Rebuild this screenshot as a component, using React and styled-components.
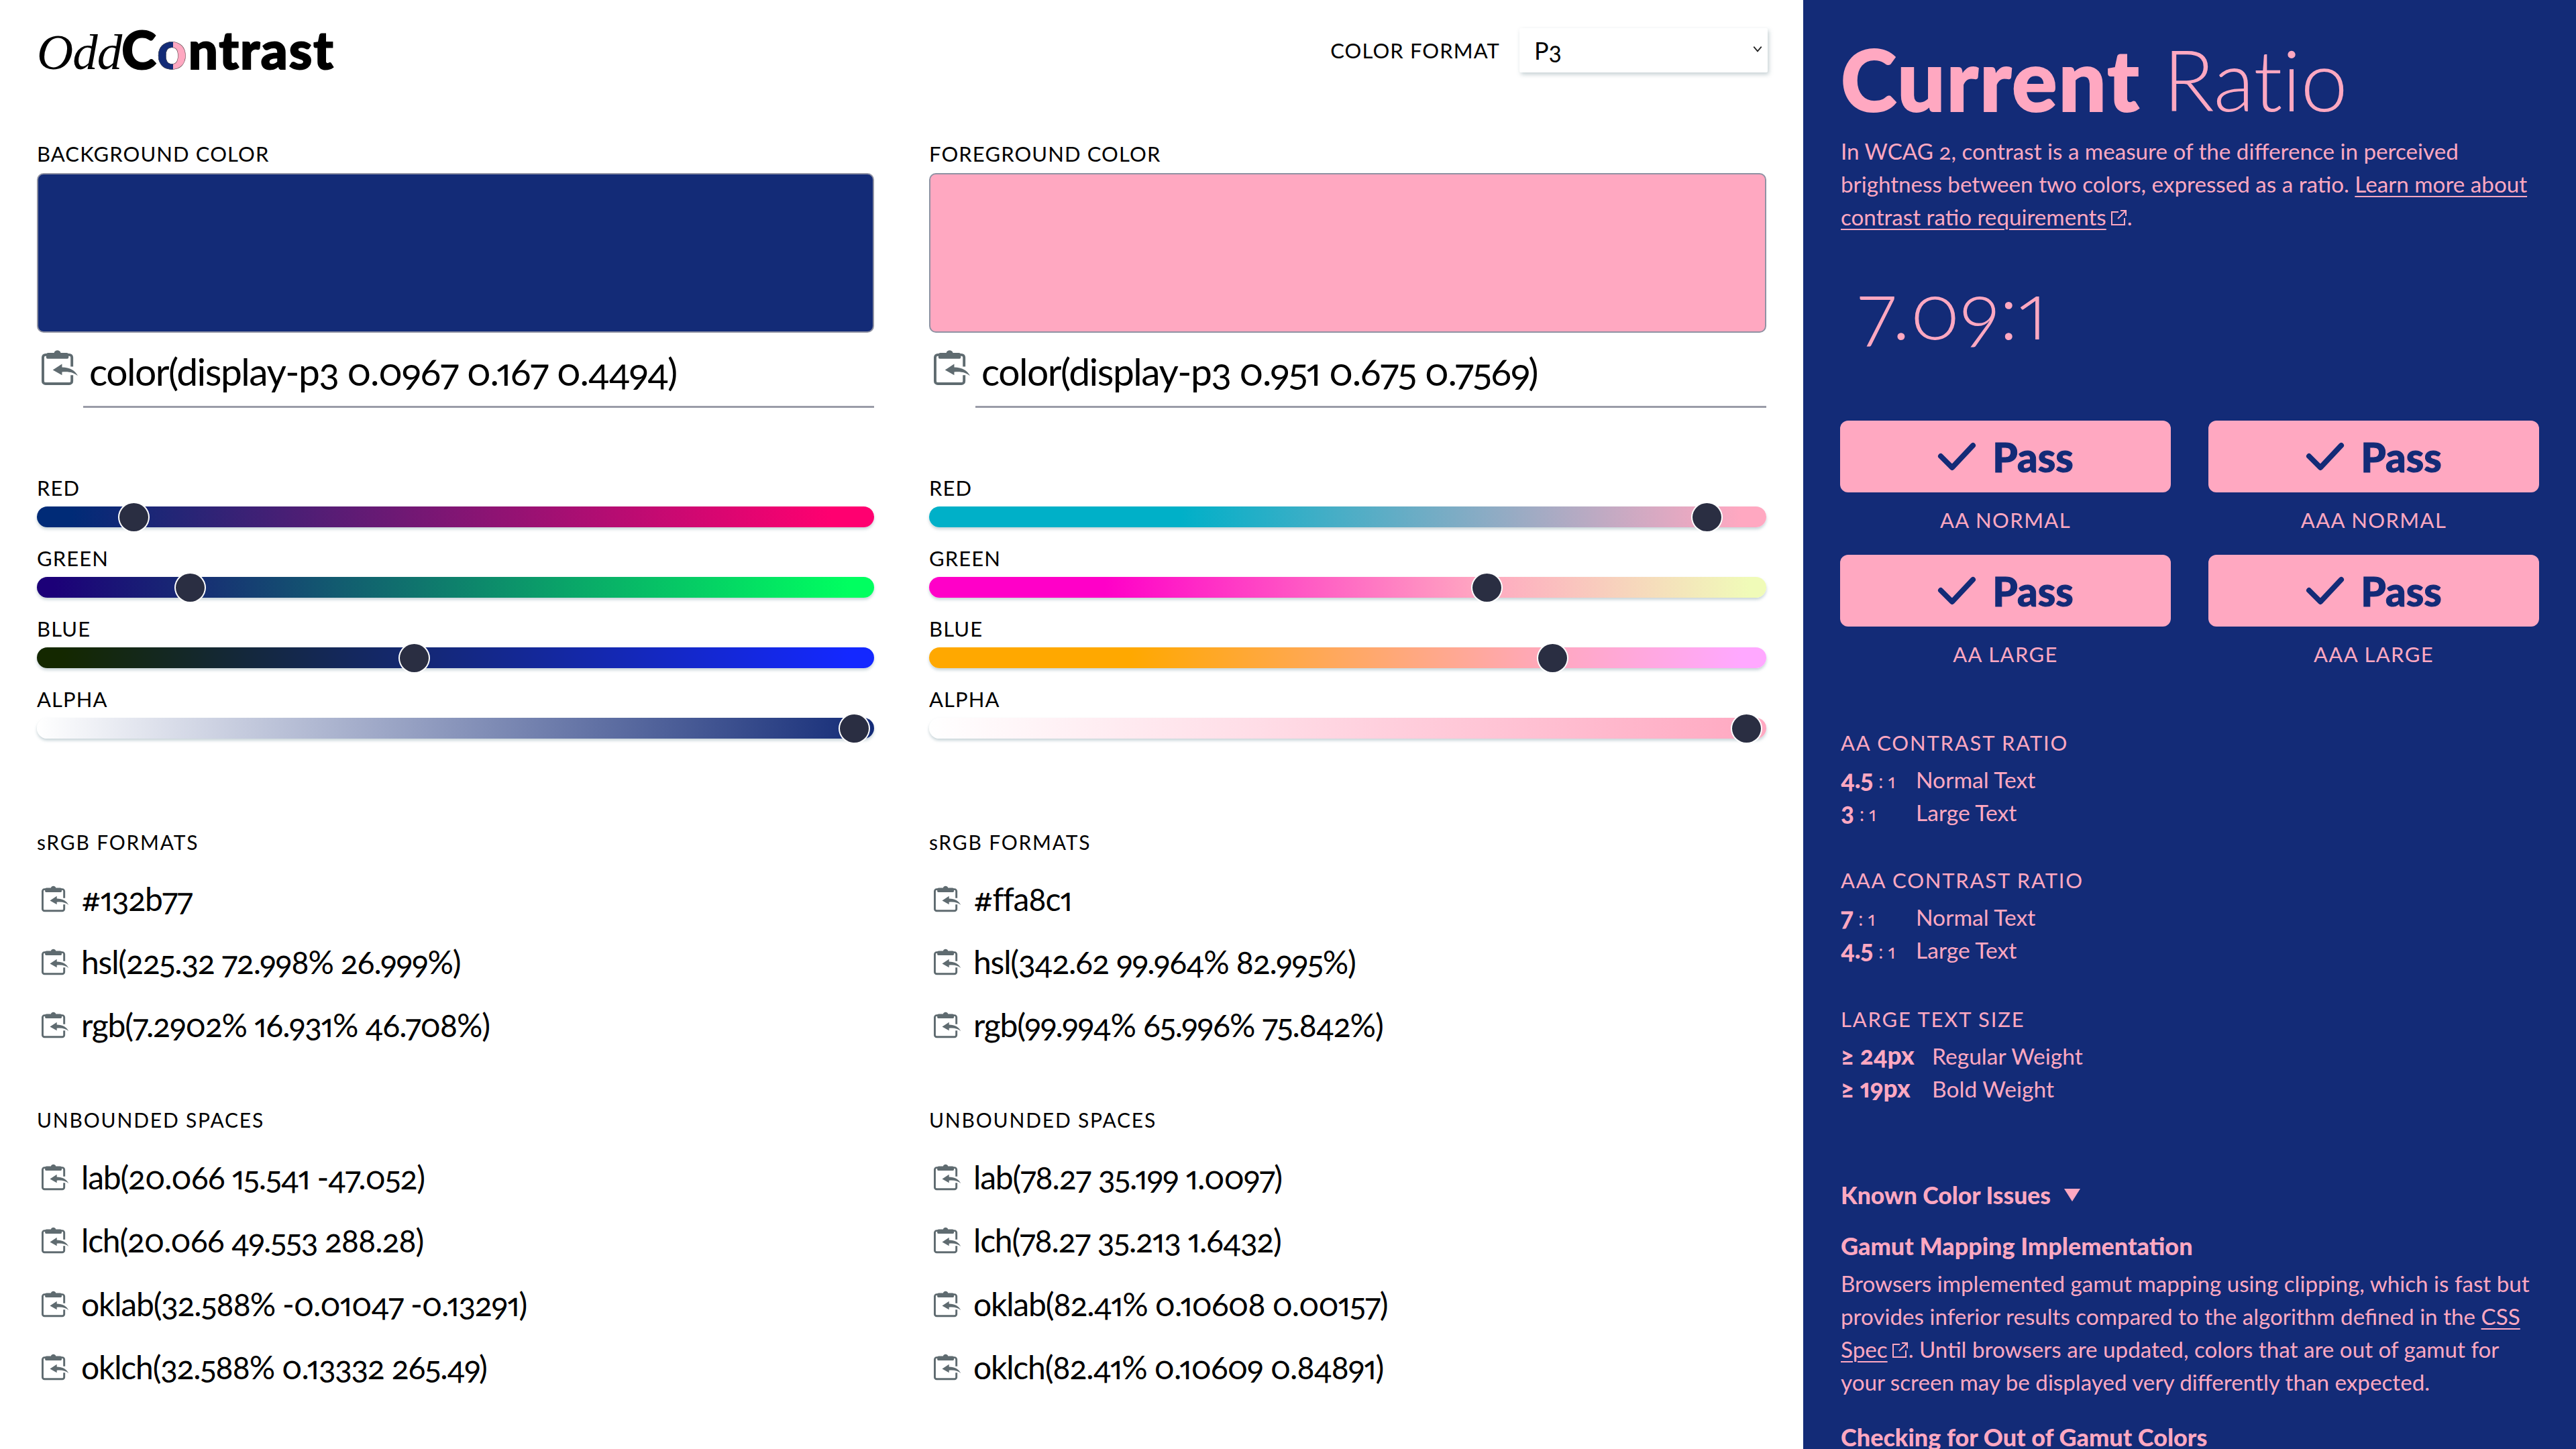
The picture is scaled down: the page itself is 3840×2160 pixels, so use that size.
import React from "react";
import styled, { createGlobalStyle } from "styled-components";

const NAVY = "#132b77";
const PINK = "#ffa8c1";
const BODY_FONT = `Lato, "Noto Sans", sans-serif`;

const GlobalStyle = createGlobalStyle`
  html, body {
    margin: 0;
    padding: 0;
    background: #fff;
  }
  body {
    font-family: ${BODY_FONT};
    font-variant-numeric: oldstyle-nums proportional-nums;
    color: #000;
  }
  * {
    box-sizing: border-box;
  }
`;

const Page = styled.div`
  display: grid;
  grid-template-columns: 2688px 1152px;
  height: 2160px;
  overflow: hidden;
`;

const Main = styled.main`
  padding: 42px 53px 0 55px;
`;

const Header = styled.header`
  display: flex;
  align-items: center;
  justify-content: space-between;
  height: 66px;
`;

const Logo = styled.h1`
  margin: 0;
  display: flex;
  align-items: baseline;
  line-height: 66px;
  color: #000;
`;

const LogoOdd = styled.span`
  font-family: "Liberation Serif", serif;
  font-style: italic;
  font-weight: 400;
  font-size: 75px;
  letter-spacing: -1px;
`;

const LogoBold = styled.span`
  font-family: Lato, sans-serif;
  font-weight: 900;
  font-size: 78px;
  letter-spacing: 2px;
  -webkit-text-stroke: 2px #000;
`;

const LogoO = styled.span`
  background: linear-gradient(to right, ${NAVY} 50%, ${PINK} 50%);
  -webkit-background-clip: text;
  background-clip: text;
  color: transparent;
  -webkit-text-stroke: 0.5px #444;
`;

const FormatPicker = styled.div`
  display: flex;
  align-items: center;
  gap: 29px;
`;

const SmallLabel = styled.div`
  font-size: ${(props) => props.$size || 31}px;
  line-height: 40px;
  letter-spacing: ${(props) => (props.$size ? 1.8 : 1.1)}px;
  font-weight: 400;
`;

const SelectWrap = styled.div`
  position: relative;
  width: 370px;
  height: 66px;
`;

const Select = styled.select`
  appearance: none;
  width: 100%;
  height: 100%;
  padding: 0 22px;
  border: 0;
  border-radius: 2px;
  background: #fff;
  color: #000;
  font-family: ${BODY_FONT};
  font-variant-numeric: oldstyle-nums;
  font-size: 36px;
  box-shadow: 2px 3px 6px rgba(90, 120, 130, 0.35);
`;

const SelectChevron = styled.svg`
  position: absolute;
  right: 7px;
  top: 23px;
  width: 16px;
  height: 16px;
  pointer-events: none;
`;

const Columns = styled.div`
  display: grid;
  grid-template-columns: 1248px 1248px;
  column-gap: 82px;
  margin-top: 101px;
`;

const Column = styled.section`
  min-width: 0;
`;

const Swatch = styled.div`
  height: 238px;
  margin-top: 9px;
  border: 2.5px solid #8f92a3;
  border-radius: 10px;
  background: ${(props) => props.$color};
`;

const ValueRow = styled.div`
  display: flex;
  align-items: flex-start;
  margin-top: 24px;
`;

const CopyButton = styled.svg`
  flex: none;
  display: block;
  width: ${(props) => props.$size}px;
  height: ${(props) => props.$size}px;
  margin-left: 7px;
`;

const ColorValue = styled.div`
  flex: 1;
  height: 88px;
  margin-left: 7px;
  padding-left: 9px;
  border-bottom: 3px solid #9a9ca8;
  font-size: 57px;
  line-height: 66px;
  letter-spacing: -1.5px;
  white-space: nowrap;
`;

const Sliders = styled.div`
  margin-top: 99px;
`;

const SliderBlock = styled.div`
  padding-bottom: 26px;
`;

const Track = styled.div`
  position: relative;
  height: 31px;
  margin-top: 8px;
  border-radius: 16px;
  background: ${(props) => props.$gradient};
  box-shadow: 0 3px 4px rgba(120, 150, 160, 0.4);
`;

const Thumb = styled.span`
  position: absolute;
  top: -7px;
  width: 47px;
  height: 46px;
  margin-left: -23.5px;
  border: 2px solid #fff;
  border-radius: 50%;
  background: #2a2e42;
`;

const FormatGroup = styled.div`
  margin-top: ${(props) => props.$top}px;
`;

const FormatList = styled.div`
  margin-top: ${(props) => props.$top}px;
`;

const FormatRow = styled.div`
  display: flex;
  align-items: center;
  height: 94.4px;
`;

const FormatText = styled.span`
  margin-left: 18px;
  font-size: 48px;
  letter-spacing: -1.2px;
  white-space: nowrap;
`;

const Aside = styled.aside`
  padding: 48px 55px 0;
  background: ${NAVY};
  color: ${PINK};
`;

const Title = styled.h2`
  margin: 0;
  font-size: 126px;
  line-height: 140px;
  font-weight: 300;
  letter-spacing: -0.5px;
  padding-left: 1px;
  strong {
    font-weight: 900;
    letter-spacing: 2px;
    -webkit-text-stroke: 2px ${PINK};
  }
`;

const Intro = styled.p`
  margin: 13px 0 0;
  padding-left: 1px;
  font-size: 33.2px;
  line-height: 49px;
`;

const Link = styled.a`
  color: inherit;
  text-decoration: underline;
  text-underline-offset: 5px;
  text-decoration-thickness: 2px;
`;

const External = styled.svg`
  display: inline-block;
  width: 25px;
  height: 25px;
  margin-left: 6px;
  vertical-align: -1px;
`;

const RatioValue = styled.div`
  margin-top: 38px;
  padding-left: 26px;
  font-size: 117px;
  line-height: 150px;
  font-weight: 300;
`;

const ResultGrid = styled.div`
  display: grid;
  grid-template-columns: 493px 493px;
  column-gap: 56px;
  row-gap: 32px;
  margin-top: 91px;
`;

const Result = styled.div`
  text-align: center;
`;

const PassBadge = styled.div`
  display: flex;
  align-items: center;
  justify-content: center;
  gap: 24px;
  height: 107px;
  border-radius: 12px;
  background: ${PINK};
  color: ${NAVY};
  font-size: 60px;
  font-weight: 900;
  -webkit-text-stroke: 1px ${NAVY};
`;

const Tick = styled.svg`
  width: 58px;
  height: 44px;
`;

const ResultLabel = styled.div`
  margin-top: 21px;
  font-size: 31px;
  line-height: 40px;
  letter-spacing: 1.4px;
`;

const InfoGroup = styled.div`
  margin-top: ${(props) => props.$top}px;
  padding-left: 1px;
`;

const InfoHeading = styled.div`
  font-size: 31px;
  line-height: 40px;
  letter-spacing: 1.8px;
`;

const InfoRows = styled.div`
  margin-top: 9px;
`;

const InfoRow = styled.div`
  display: grid;
  grid-template-columns: ${(props) => props.$col}px 1fr;
  align-items: baseline;
  height: 49px;
  font-size: 33.6px;
  line-height: 49px;
`;

const Strong = styled.span`
  font-size: 37px;
  font-weight: 900;
`;

const Ratio = styled.span`
  font-size: 28px;
  margin-left: 8px;
`;

const Disclosure = styled.div`
  display: flex;
  align-items: center;
  gap: 20px;
  margin-top: 111px;
  padding-left: 1px;
  font-size: 35.5px;
  line-height: 49px;
  font-weight: 900;
`;

const Triangle = styled.span`
  width: 0;
  height: 0;
  border-left: 12px solid transparent;
  border-right: 12px solid transparent;
  border-top: 19px solid ${PINK};
`;

const IssueTitle = styled.h3`
  margin: ${(props) => props.$top}px 0 0;
  padding-left: 1px;
  font-size: 36px;
  line-height: 49px;
  font-weight: 900;
  white-space: nowrap;
`;

const IssueText = styled.p`
  margin: 7px 0 0;
  padding-left: 1px;
  font-size: 33.2px;
  line-height: 49px;
`;

const CopyIcon = ({ size }) => (
  <CopyButton $size={size} viewBox="0 0 56 56" aria-hidden="true">
    <path
      d="M10 9H6a4 4 0 0 0-4 4v36a4 4 0 0 0 4 4h36a4 4 0 0 0 4-4v-9M46 27V13a4 4 0 0 0-4-4h-4"
      fill="none"
      stroke="#5f6b70"
      strokeWidth="4"
    />
    <path
      d="M7 13v-4a3 3 0 0 1 3-3h9c1-5 9-5 10 0h9a3 3 0 0 1 3 3v4a2 2 0 0 1-2 2H9a2 2 0 0 1-2-2z"
      fill="#5f6b70"
    />
    <path
      d="M17 32 31 23v5c12 0 20 5 24 13-6-5-13-7-24-6v5z"
      fill="#5f6b70"
    />
  </CopyButton>
);

const ExternalIcon = () => (
  <External viewBox="0 0 25 25" aria-hidden="true">
    <path
      d="M12 4H2v19h19V13M11 14 23 2M15 2h8v8"
      fill="none"
      stroke={PINK}
      strokeWidth="2"
    />
  </External>
);

const TickIcon = () => (
  <Tick viewBox="0 0 58 44" aria-hidden="true">
    <path
      d="M5 21 22 38 53 5"
      fill="none"
      stroke={NAVY}
      strokeWidth="8"
      strokeLinecap="round"
      strokeLinejoin="round"
    />
  </Tick>
);

const colors = [
  {
    title: "BACKGROUND COLOR",
    swatch: NAVY,
    value: "color(display-p3 0.0967 0.167 0.4494)",
    sliders: [
      { name: "RED", at: 11.6, gradient: `linear-gradient(to right, #002b77 4%, #ff0070 95%)` },
      { name: "GREEN", at: 18.3, gradient: `linear-gradient(to right, #1c0078 2%, #00ff60 97%)` },
      { name: "BLUE", at: 45.1, gradient: `linear-gradient(to right, #142800 3%, #1428ff 97%)` },
      { name: "ALPHA", at: 97.6, gradient: `linear-gradient(to right, #fff 0%, ${NAVY} 100%)` },
    ],
    srgb: ["#132b77", "hsl(225.32 72.998% 26.999%)", "rgb(7.2902% 16.931% 46.708%)"],
    unbounded: [
      "lab(20.066 15.541 -47.052)",
      "lch(20.066 49.553 288.28)",
      "oklab(32.588% -0.01047 -0.13291)",
      "oklch(32.588% 0.13332 265.49)",
    ],
  },
  {
    title: "FOREGROUND COLOR",
    swatch: PINK,
    value: "color(display-p3 0.951 0.675 0.7569)",
    sliders: [
      { name: "RED", at: 92.9, gradient: `linear-gradient(to right, #00b0c8 30%, ${PINK} 97%)` },
      { name: "GREEN", at: 66.6, gradient: `linear-gradient(to right, #ff00c8 21%, ${PINK} 66%, #f0fbb8 98%)` },
      { name: "BLUE", at: 74.5, gradient: `linear-gradient(to right, #ffa800 24%, ${PINK} 75%, #ffa8ff 97%)` },
      { name: "ALPHA", at: 97.6, gradient: `linear-gradient(to right, #fff 0%, ${PINK} 100%)` },
    ],
    srgb: ["#ffa8c1", "hsl(342.62 99.964% 82.995%)", "rgb(99.994% 65.996% 75.842%)"],
    unbounded: [
      "lab(78.27 35.199 1.0097)",
      "lch(78.27 35.213 1.6432)",
      "oklab(82.41% 0.10608 0.00157)",
      "oklch(82.41% 0.10609 0.84891)",
    ],
  },
];

const results = ["AA NORMAL", "AAA NORMAL", "AA LARGE", "AAA LARGE"];

const info = [
  {
    title: "AA CONTRAST RATIO",
    top: 92,
    col: 112,
    rows: [
      ["4.5", ": 1", "Normal Text"],
      ["3", ": 1", "Large Text"],
    ],
  },
  {
    title: "AAA CONTRAST RATIO",
    top: 58,
    col: 112,
    rows: [
      ["7", ": 1", "Normal Text"],
      ["4.5", ": 1", "Large Text"],
    ],
  },
  {
    title: "LARGE TEXT SIZE",
    top: 60,
    col: 136,
    rows: [
      ["≥ 24px", "", "Regular Weight"],
      ["≥ 19px", "", "Bold Weight"],
    ],
  },
];

const FormatLines = ({ lines, top }) => (
  <FormatList $top={top}>
    {lines.map((line) => (
      <FormatRow key={line}>
        <CopyIcon size={41} />
        <FormatText>{line}</FormatText>
      </FormatRow>
    ))}
  </FormatList>
);

const ColorColumn = ({ color }) => (
  <Column>
    <SmallLabel>{color.title}</SmallLabel>
    <Swatch $color={color.swatch} />
    <ValueRow>
      <CopyIcon size={55} />
      <ColorValue>{color.value}</ColorValue>
    </ValueRow>
    <Sliders>
      {color.sliders.map((slider) => (
        <SliderBlock key={slider.name}>
          <SmallLabel>{slider.name}</SmallLabel>
          <Track $gradient={slider.gradient}>
            <Thumb style={{ left: `${slider.at}%` }} />
          </Track>
        </SliderBlock>
      ))}
    </Sliders>
    <FormatGroup $top={108}>
      <SmallLabel $size={30}>sRGB FORMATS</SmallLabel>
      <FormatLines lines={color.srgb} top={17} />
    </FormatGroup>
    <FormatGroup $top={74}>
      <SmallLabel $size={30}>UNBOUNDED SPACES</SmallLabel>
      <FormatLines lines={color.unbounded} top={18} />
    </FormatGroup>
  </Column>
);

const App = () => {
  return (
    <Page>
      <GlobalStyle />
      <Main>
        <Header>
          <Logo>
            <LogoOdd>Odd</LogoOdd>
            <LogoBold>
              C<LogoO>o</LogoO>ntrast
            </LogoBold>
          </Logo>
          <FormatPicker>
            <SmallLabel>COLOR FORMAT</SmallLabel>
            <SelectWrap>
              <Select defaultValue="p3">
                <option value="p3">P3</option>
              </Select>
              <SelectChevron viewBox="0 0 14 14" aria-hidden="true">
                <path d="M2 4l5 6 5-6" fill="none" stroke="#222" strokeWidth="1.6" />
              </SelectChevron>
            </SelectWrap>
          </FormatPicker>
        </Header>
        <Columns>
          {colors.map((color) => (
            <ColorColumn key={color.title} color={color} />
          ))}
        </Columns>
      </Main>
      <Aside>
        <Title>
          <strong>Current</strong> Ratio
        </Title>
        <Intro>
          In WCAG 2, contrast is a measure of the difference in perceived brightness
          between two colors, expressed as a ratio.{" "}
          <Link>
            Learn more about contrast ratio requirements
          </Link>
          <ExternalIcon />.
        </Intro>
        <RatioValue>7.09:1</RatioValue>
        <ResultGrid>
          {results.map((label) => (
            <Result key={label}>
              <PassBadge>
                <TickIcon />
                Pass
              </PassBadge>
              <ResultLabel>{label}</ResultLabel>
            </Result>
          ))}
        </ResultGrid>
        {info.map((group) => (
          <InfoGroup key={group.title} $top={group.top}>
            <InfoHeading>{group.title}</InfoHeading>
            <InfoRows>
              {group.rows.map(([value, suffix, label]) => (
                <InfoRow key={label} $col={group.col}>
                  <span>
                    <Strong>{value}</Strong>
                    {suffix && <Ratio>{suffix}</Ratio>}
                  </span>
                  <span>{label}</span>
                </InfoRow>
              ))}
            </InfoRows>
          </InfoGroup>
        ))}
        <Disclosure>
          Known Color Issues
          <Triangle />
        </Disclosure>
        <IssueTitle $top={27}>Gamut Mapping Implementation</IssueTitle>
        <IssueText>
          Browsers implemented gamut mapping using clipping, which is fast but provides
          inferior results compared to the algorithm defined in the{" "}
          <Link>CSS Spec</Link>
          <ExternalIcon />. Until browsers are updated, colors that are out of gamut for
          your screen may be displayed very differently than expected.
        </IssueText>
        <IssueTitle $top={33}>Checking for Out of Gamut Colors</IssueTitle>
      </Aside>
    </Page>
  );
};

export default App;
